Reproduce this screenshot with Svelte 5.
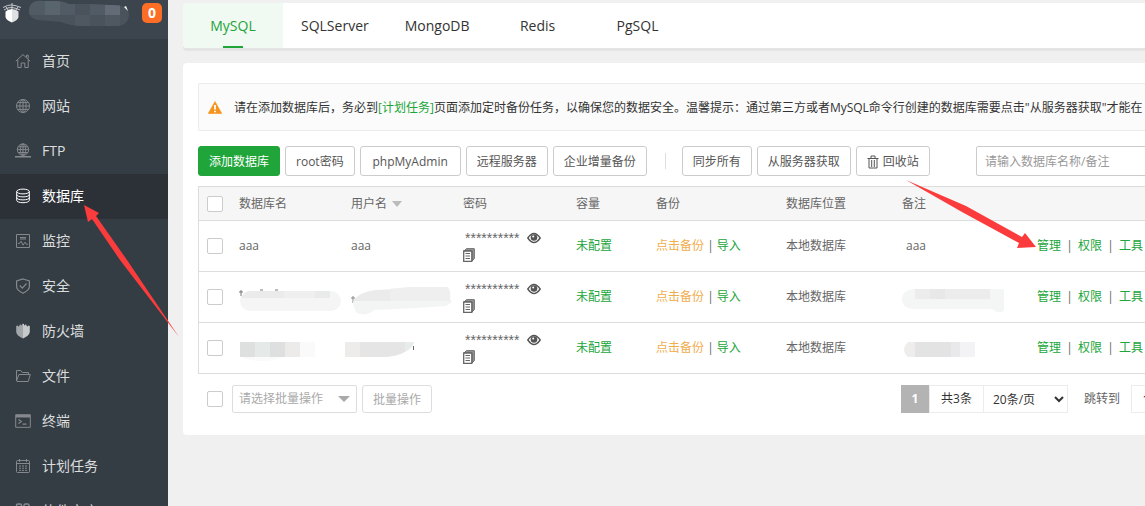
<script>
  const menu = [
    { icon: 'home', label: '首页' },
    { icon: 'site', label: '网站' },
    { icon: 'ftp', label: 'FTP' },
    { icon: 'database', label: '数据库' },
    { icon: 'monitor', label: '监控' },
    { icon: 'security', label: '安全' },
    { icon: 'firewall', label: '防火墙' },
    { icon: 'files', label: '文件' },
    { icon: 'terminal', label: '终端' },
    { icon: 'cron', label: '计划任务' },
    { icon: 'soft', label: '软件商店' }
  ];
  const tabs = ['MySQL', 'SQLServer', 'MongoDB', 'Redis', 'PgSQL'];
  const rows = [
    { id: 1, name: 'aaa', user: 'aaa', note: 'aaa' },
    { id: 2 },
    { id: 3 }
  ];

  let activeMenu = $state('database');
  let activeTab = $state('MySQL');
  let selected = $state([]);
  let keyword = $state('');

  function toggleAll(e) {
    selected = e.currentTarget.checked ? rows.map((row) => row.id) : [];
  }
</script>

{#snippet menuIcon(name)}
  <svg class="menu__icon" viewBox="0 0 16 16" fill="none" stroke="currentColor" aria-hidden="true">
    {#if name === 'home'}
      <path d="M.8 8.2 8 1.6l7.2 6.6M2.8 7v7.5h3.4V10h3.6v4.5h3.4V7M11.5 4V2.2h1.7v3.5" />
    {:else if name === 'site'}
      <circle cx="8" cy="8" r="6.5" />
      <ellipse cx="8" cy="8" rx="3.2" ry="6.5" />
      <path d="M8 1.5v13M1.5 8h13M2.5 4.6h11M2.5 11.4h11" />
    {:else if name === 'ftp'}
      <circle cx="8" cy="6.6" r="5.7" />
      <ellipse cx="8" cy="6.6" rx="2.7" ry="5.7" />
      <path d="M8 1v11M2.3 6.6h11.4M3.2 3.8h9.6M3.2 9.5h9.6" />
      <path d="M0 13.8h16M6 13.8h4" stroke-width="1.6" />
    {:else if name === 'database'}
      <ellipse cx="8" cy="3.5" rx="6.3" ry="2.4" />
      <path d="M1.7 3.5v8.8c0 3.2 12.6 3.2 12.6 0V3.5M1.7 6.5c0 3.2 12.6 3.2 12.6 0M1.7 9.5c0 3.2 12.6 3.2 12.6 0" />
    {:else if name === 'monitor'}
      <path d="M1.5 1.5h13v13h-13zM5 4.5h6M5 6h6M3 10.5h1.5L6 8.2l2 4 2-3 1.3 2H13" />
    {:else if name === 'security'}
      <path d="M8 1 14.4 3v5.5c0 3-2.8 5-6.4 6.8-3.6-1.8-6.4-3.8-6.4-6.8V3zM4.8 7.5l2.5 2.6 4.2-4.6" stroke-width="1.2" />
    {:else if name === 'firewall'}
      <path d="M8 .8V15.5C4 13.5 1.2 11.5 1.2 8.5V3L3 2.5V3.5L4.5 3V1.8L6 1.5V2.5L7 2V1z" fill="#a4a7a9" stroke="none" />
      <path d="M8 .8V15.5C12 13.5 14.8 11.5 14.8 8.5V3L13 2.5V3.5L11.5 3V1.8L10 1.5V2.5L9 2V1z" fill="#c8c9ca" stroke="none" />
    {:else if name === 'files'}
      <path d="M1.5 13V2.5h4.3l1.5 2h6.2v2M1.5 13 4 6.5h11.3L13.2 13.5H2z" />
    {:else if name === 'terminal'}
      <path d="M.7 1.7h14.6v12.6H.7z" />
      <path d="M1 3.2h14" stroke-width="2.6" />
      <path d="m3.5 6.5 2.8 2-2.8 2M7.5 11.2h4" stroke-width="1.2" />
    {:else if name === 'cron'}
      <rect x="1.5" y="2.5" width="13" height="12" rx="1" />
      <path d="M1.5 5.5h13M4.5 1v3M11.5 1v3" />
      <path d="M4 8h8M4 10.2h8M4 12.4h8" stroke-dasharray="2 1" />
    {:else}
      <path d="M1.5 2.5q0-1.5 1.5-1.5h2q1.5 0 1.5 1.5v4h-5zM9 2.5Q9 1 10.5 1h2Q14 1 14 2.5v4H9zM1.5 9.5h5v5h-5zM9 9.5h5v5H9z" stroke-width="1.5" />
    {/if}
  </svg>
{/snippet}

<div class="layout">
  <aside class="sidebar">
    <header class="sidebar__head">
      <svg class="sidebar__logo" viewBox="0 0 18 20" aria-hidden="true">
        <path d="M9 0v6M0 4.5Q5 1.5 9 2t9 2.5M1 7Q5 4 9 4.500T17 7M3 4l2 3M15 4l-2 3" fill="none" stroke="#c6c9cc" />
        <path d="M9 6Q5 6 2.5 8.5V14Q3 17 9 19.500z" fill="#fff" />
        <path d="M9 6q4 0 6.5 2.5V14Q15 17 9 19.500z" fill="#dfe0e2" />
      </svg>
      <svg class="sidebar__server" viewBox="0 0 102 27" aria-hidden="true">
        <clipPath id="server-shape">
          <path d="M2 6Q5 0 15 1h12q8 0 14 3h20l20 1q20-1 20 9 0 12-13 12H56q-14 0-23-4L9 20Q-2 17 2 6" />
        </clipPath>
        <g clip-path="url(#server-shape)">
          <path d="M0 0h102v27H0z" fill="#4a525b" />
          <path d="M0 0h17v15H0z" fill="#505b63" />
          <path d="M17 0h15v15H17z" fill="#59656c" />
          <path d="M32 0h15v15H32zM62 0h15v15H62z" fill="#515b65" />
          <path d="M77 0h15v15H77z" fill="#636b76" />
          <path d="M47 15h15v12H47zM77 15h15v12H77z" fill="#4f5861" />
        </g>
        <path d="m96 7 2-1 2 5z" fill="#fff" />
      </svg>
      <span class="sidebar__badge">0</span>
    </header>
    <nav class="menu">
      {#each menu as item}
        <a
          class="menu__item"
          class:menu__item--active={activeMenu === item.icon}
          href="#{item.icon}"
          onclick={() => (activeMenu = item.icon)}
        >
          {@render menuIcon(item.icon)}
          {item.label}
        </a>
      {/each}
    </nav>
  </aside>

  <main class="main">
    <div class="tabs">
      {#each tabs as tab}
        <button class="tab" class:tab--active={activeTab === tab} onclick={() => (activeTab = tab)}>{tab}</button>
      {/each}
    </div>

    <section class="panel">
      <div class="notice">
        <svg class="notice__icon" viewBox="0 0 14 13" aria-hidden="true">
          <path d="M7 .5 13.8 12.500H.2z" fill="#f7941d" stroke="#f7941d" stroke-width=".6" stroke-linejoin="round" />
          <path d="M7 4v4.5M7 9.700v1.6" stroke="#fff" stroke-width="1.800" />
        </svg>
        <p>请在添加数据库后，务必到<a href="#cron">[计划任务]</a>页面添加定时备份任务，以确保您的数据安全。温馨提示：通过第三方或者MySQL命令行创建的数据库需要点击"从服务器获取"才能在</p>
      </div>

      <div class="toolbar">
        <button class="btn btn--primary">添加数据库</button>
        <button class="btn">root密码</button>
        <button class="btn btn--wide">phpMyAdmin</button>
        <button class="btn">远程服务器</button>
        <button class="btn">企业增量备份</button>
        <span class="toolbar__divider"></span>
        <button class="btn">同步所有</button>
        <button class="btn">从服务器获取</button>
        <button class="btn">
          <svg class="btn__icon" viewBox="0 0 12 14" fill="none" stroke="#555" aria-hidden="true">
            <path d="M.5 3.500h11M4 3V1h4v2M2 4v9h8V4M4.700 5v7M7.300 5v7" />
          </svg>回收站
        </button>
        <input class="search" type="text" aria-label="搜索" placeholder="请输入数据库名称/备注" bind:value={keyword} />
      </div>

      <table class="table">
        <colgroup>
          <col class="col-check" />
          <col class="col-name" />
          <col class="col-name" />
          <col class="col-password" />
          <col class="col-quota" />
          <col class="col-backup" />
          <col class="col-place" />
          <col class="col-note" />
        </colgroup>
        <thead>
          <tr>
            <th><input type="checkbox" aria-label="全选" checked={selected.length === rows.length} onchange={toggleAll} /></th>
            <th>数据库名</th>
            <th>用户名<span class="sort"></span></th>
            <th>密码</th>
            <th>容量</th>
            <th>备份</th>
            <th>数据库位置</th>
            <th>备注</th>
            <th></th>
          </tr>
        </thead>
        <tbody>
          {#each rows as row}
            <tr>
              <td><input type="checkbox" aria-label="选择" value={row.id} bind:group={selected} /></td>
              {#if row.id === 1}
                <td>{row.name}</td>
                <td>{row.user}</td>
              {:else if row.id === 2}
                <td>
                  <svg class="mask" viewBox="0 0 102 24" aria-hidden="true">
                    <path d="M2 1v6M0 3h4M21 1h3M36 1h3" stroke="#777" />
                    <rect x="1" y="2" width="101" height="20" rx="10" fill="#f5f5f5" />
                    <path d="M10 2h35v7H2Q5 3 10 2" fill="#ebebeb" />
                    <path d="M45 2h31v7H45z" fill="#efefef" />
                    <path d="M76 2h15v7H76z" fill="#e9ebeb" />
                  </svg>
                </td>
                <td>
                  <svg class="mask" viewBox="0 0 102 28" aria-hidden="true">
                    <path d="M2 9v7M0 11h4" stroke="#888" />
                    <path d="M2 15Q8 5 25 3L60 0h36q4 2 3 12l2 3-6 4-30 2-42 2q-8 7-17 3Q3 22 2 15" fill="#f3f4f4" />
                    <path d="M2 14Q8 5 25 3h14v11z" fill="#ebebeb" />
                    <path d="M39 2 60 0h36q4 2 3 14H39z" fill="#efefef" />
                  </svg>
                </td>
              {:else}
                <td>
                  <svg class="mask" viewBox="0 0 102 20" aria-hidden="true">
                    <path d="M1 0h15v15H1zM31 0h15v15H31z" fill="#dedfdf" />
                    <path d="M16 0h15v15H16z" fill="#e5e9e8" />
                    <path d="M46 0h15v15H46z" fill="#ecebea" />
                    <path d="M61 0h15v15H61zM3 15h40q-6 4-20 4T3 15" fill="#fafafa" />
                  </svg>
                </td>
                <td>
                  <svg class="mask mask--left" viewBox="0 0 102 20" aria-hidden="true">
                    <path d="M0 0h15v15H0z" fill="#eeeceb" />
                    <path d="M15 0h45v10q-9 5-22 5H15z" fill="#e5e5e5" />
                    <path d="M60 0h9q-1 6-9 10z" fill="#e9ecec" />
                    <path d="M68.500 4v4" stroke="#666" />
                  </svg>
                </td>
              {/if}
              <td>
                <div class="password">
                  <span class="password__text">**********</span>
                  <button class="icon-btn" aria-label="显示密码">
                    <svg viewBox="0 0 14 12" aria-hidden="true">
                      <path d="M.8 6Q7-3 13.200 6 7 15 .8 6z" fill="#fff" stroke="#555" stroke-width="1.400" />
                      <circle cx="7" cy="5.500" r="3.300" fill="#555" />
                      <circle cx="6.200" cy="4.500" r="1" fill="#fff" />
                    </svg>
                  </button>
                </div>
                <button class="icon-btn icon-btn--copy" aria-label="复制密码">
                  <svg viewBox="0 0 12 14" fill="#fff" stroke="#666" aria-hidden="true">
                    <path d="M3.500.7h7.800v10L9 13V3H1z" fill="#999" />
                    <path d="M.7 3h8.100v10.300H.7z" stroke-width="1.300" />
                    <path d="M2.500 5.500H7M2.500 8H7M2.500 10.500H7" />
                  </svg>
                </button>
              </td>
              <td><a href="#quota">未配置</a></td>
              <td><a class="warn" href="#backup">点击备份</a> | <a href="#import">导入</a></td>
              <td>本地数据库</td>
              <td>
                {#if row.note}
                  <span class="note">{row.note}</span>
                {:else if row.id === 2}
                  <svg class="mask" viewBox="0 0 102 24" aria-hidden="true">
                    <path d="M12 0h88q3 0 3 4v17q-7 5-13-1H12Q0 19 0 10T12 0" fill="#f4f5f5" />
                    <path d="M13 0h75v10H13z" fill="#ececec" />
                    <path d="M28 0h15v10H28z" fill="#e8e8e8" />
                  </svg>
                {:else}
                  <svg class="mask" viewBox="0 0 102 20" aria-hidden="true">
                    <path d="M6 0h7v15H6Q-2 8 6 0" fill="#eeedec" />
                    <path d="M13 0h36v15H13z" fill="#e3e3e4" />
                    <path d="M49 0h9v15h-9z" fill="#e9e9eb" />
                    <path d="M58 0h15v15H58z" fill="#f3f3f6" />
                  </svg>
                {/if}
              </td>
              <td class="ops"><a href="#manage">管理</a><i>|</i><a href="#access">权限</a><i>|</i><a href="#tools">工具</a></td>
            </tr>
          {/each}
        </tbody>
      </table>

      <footer class="footer">
        <input type="checkbox" aria-label="全选" checked={selected.length === rows.length} onchange={toggleAll} />
        <div class="batch">
          <select class="batch__select" aria-label="批量操作">
            <option>请选择批量操作</option>
          </select>
          <span class="batch__arrow"></span>
        </div>
        <button class="btn btn--batch">批量操作</button>
        <div class="pager">
          <span class="pager__current">1</span>
          <span class="pager__total">共3条</span>
          <select class="pager__size" aria-label="每页条数">
            <option>20条/页</option>
          </select>
          <label class="pager__label" for="jump">跳转到</label>
          <input class="pager__jump" id="jump" type="text" value="1" />
        </div>
      </footer>
    </section>
  </main>

  <svg class="arrow arrow--menu" viewBox="0 0 96 134" aria-hidden="true">
    <path d="M0 0 15 8 12 11 43 55 95 132 36 55 8 14 4 17z" fill="#fc3c3c" />
  </svg>
  <svg class="arrow arrow--manage" viewBox="0 0 132 70" aria-hidden="true">
    <path d="M0 0 60 26 116 57 119 53 130 67 111 68 113 63 56 32z" fill="#fc3c3c" />
  </svg>
</div>

<style>
  :global(body) {
    background: #f0f0f0;
    overflow: hidden;
  }
  .layout {
    position: relative;
    display: flex;
    height: 100vh;
    overflow: hidden;
    font: 12px/18px "Open Sans", "Noto Sans CJK SC", sans-serif;
    color: #666;
  }
  .layout * { box-sizing: border-box; }
  button, input, select { font: inherit; margin: 0; }
  button { cursor: pointer; }
  a { color: #20a53a; text-decoration: none; }

  .sidebar {
    flex: 0 0 168px;
    background: #353d44;
    overflow: hidden;
  }
  .sidebar__head {
    display: flex;
    align-items: flex-start;
    height: 39px;
    padding: 0 6px 0 3px;
    background: #3c444d;
  }
  .sidebar__logo { width: 18px; height: 20px; margin-top: 3px; }
  .sidebar__server { width: 102px; height: 27px; margin-left: 7px; }
  .sidebar__badge {
    width: 20px;
    height: 20px;
    margin: 3px 0 0 auto;
    border-radius: 5px;
    background: #fc6d26;
    color: #fff;
    font-size: 14px;
    font-weight: 700;
    line-height: 20px;
    text-align: center;
  }
  .menu__item {
    display: flex;
    align-items: center;
    gap: 11px;
    height: 45px;
    padding: 0 0 2px 15px;
    color: #dcdddf;
    font-size: 14px;
  }
  .menu__item--active { background: #2c3138; color: #fff; }
  .menu__icon { width: 16px; height: 16px; color: #85898d; }
  .menu__item--active .menu__icon { color: #fff; }

  .main {
    flex: 1;
    min-width: 0;
    padding: 3px 0 0 15px;
  }
  .tabs {
    display: flex;
    height: 45px;
    margin-bottom: 15px;
    border-radius: 4px 0 0 4px;
    background: #fff;
    box-shadow: 0 3px 0 #e4e4e4;
  }
  .tab {
    position: relative;
    min-width: 100px;
    padding: 0 18px;
    border: 0;
    background: none;
    color: #333;
    font-size: 14px;
  }
  .tab--active {
    border-radius: 4px 0 0 4px;
    background: #f0f9f2;
    color: #20a53a;
  }
  .tab--active::after {
    content: '';
    position: absolute;
    bottom: 0;
    left: 40px;
    width: 20px;
    height: 2px;
    background: #20a53a;
  }

  .panel {
    padding: 20px 0 22px 15px;
    border-radius: 4px 0 0 4px;
    background: #fff;
    overflow: hidden;
  }
  .notice {
    display: flex;
    align-items: center;
    gap: 12px;
    height: 48px;
    padding-left: 9px;
    border: 1px solid #ececec;
    border-right: 0;
    border-radius: 2px 0 0 2px;
    background: #fbfbfb;
    color: #333;
    white-space: nowrap;
    overflow: hidden;
  }
  .notice p { margin: 0; padding-top: 2px; }
  .notice__icon { flex: none; width: 14px; height: 13px; }

  .toolbar {
    display: flex;
    align-items: center;
    gap: 5px;
    margin: 15px 0 10px;
    white-space: nowrap;
  }
  .btn {
    display: flex;
    align-items: center;
    justify-content: center;
    flex: none;
    height: 30px;
    padding: 1px 10px 0;
    border: 1px solid #ccc;
    border-radius: 3px;
    background: #fff;
    color: #555;
  }
  .btn--primary { border-color: #20a53a; background: #20a53a; color: #fff; }
  .btn--wide { min-width: 101px; }
  .btn__icon { width: 12px; height: 14px; margin-right: 4px; }
  .toolbar__divider { width: 1px; height: 16px; margin: 0 11px 0 13px; background: #ddd; }
  .search {
    flex: none;
    width: 180px;
    height: 30px;
    margin: 0 -11px 0 auto;
    padding: 0 8px;
    border: 1px solid #ccc;
    border-radius: 2px;
  }
  .search::placeholder { color: #999; }

  .table {
    width: 100%;
    table-layout: fixed;
    border-collapse: separate;
    border-spacing: 0;
    border: solid #ddd;
    border-width: 1px 0 0 1px;
  }
  .col-check { width: 32px; }
  .col-name { width: 112px; }
  .col-password { width: 113px; }
  .col-quota { width: 80px; }
  .col-backup { width: 130px; }
  .col-place { width: 116px; }
  .col-note { width: 135px; }
  th, td {
    height: 51px;
    padding: 0 8px;
    border-bottom: 1px solid #ddd;
    text-align: left;
    white-space: nowrap;
  }
  th { height: 34px; background: #f6f6f6; font-weight: 400; }
  .sort {
    display: inline-block;
    margin-left: 5px;
    border: 5px solid transparent;
    border-top: 6px solid #bbb;
    border-bottom: 0;
    vertical-align: middle;
  }
  input[type='checkbox'] {
    display: block;
    appearance: none;
    width: 16px;
    height: 16px;
    border: 1px solid #ccc;
    border-radius: 2px;
    background: #fff;
  }
  input[type='checkbox']:checked { border-color: #20a53a; background: #20a53a; }
  .mask { display: block; width: 102px; margin-top: 8px; }
  .mask--left { margin-left: -6px; }
  .password { display: flex; align-items: center; gap: 8px; height: 16px; padding-left: 2px; }
  .password__text { font: 14px/16px "Liberation Sans", sans-serif; }
  .icon-btn { display: block; width: 14px; height: 12px; padding: 0; border: 0; background: none; }
  .icon-btn svg { display: block; width: 100%; height: 100%; }
  .icon-btn--copy { width: 12px; height: 14px; margin-top: 2px; }
  .warn { color: #f0ad4e; }
  .note { padding-left: 4px; }
  .ops i { display: inline-block; width: 17px; font-style: normal; text-align: center; }

  .footer {
    display: flex;
    align-items: center;
    gap: 5px;
    margin-top: 11px;
    padding-left: 9px;
    white-space: nowrap;
  }
  .batch { position: relative; margin-left: 4px; }
  .batch__select {
    display: block;
    appearance: none;
    width: 125px;
    height: 28px;
    padding: 0 6px;
    border: 1px solid #ddd;
    border-radius: 2px;
    background: #fff;
    color: #aaa;
  }
  .batch__arrow {
    position: absolute;
    top: 11px;
    right: 7px;
    border: 6px solid transparent;
    border-top-color: #aaa;
    border-bottom: 0;
    pointer-events: none;
  }
  .btn--batch { height: 28px; border-color: #ddd; color: #aaa; }
  .pager {
    display: flex;
    align-items: center;
    margin: 0 -16px 0 auto;
    color: #333;
  }
  .pager__current {
    width: 28px;
    height: 28px;
    background: #b3b3b3;
    color: #fff;
    font-weight: 700;
    line-height: 28px;
    text-align: center;
  }
  .pager__total {
    width: 55px;
    height: 28px;
    border: 1px solid #ececec;
    line-height: 26px;
    text-align: center;
  }
  .pager__size {
    width: 84px;
    height: 28px;
    padding: 0 0 0 5px;
    border: 1px solid #ececec;
    border-left: 0;
    background: #fff;
    color: #333;
  }
  .pager__label { margin: 0 11px 0 16px; color: #666; }
  .pager__jump {
    width: 30px;
    height: 28px;
    padding: 0;
    border: 1px solid #ececec;
    text-align: center;
  }

  .arrow { position: absolute; pointer-events: none; }
  .arrow--menu { top: 205px; left: 84px; width: 96px; height: 134px; }
  .arrow--manage { top: 180px; left: 906px; width: 132px; height: 70px; }
</style>
